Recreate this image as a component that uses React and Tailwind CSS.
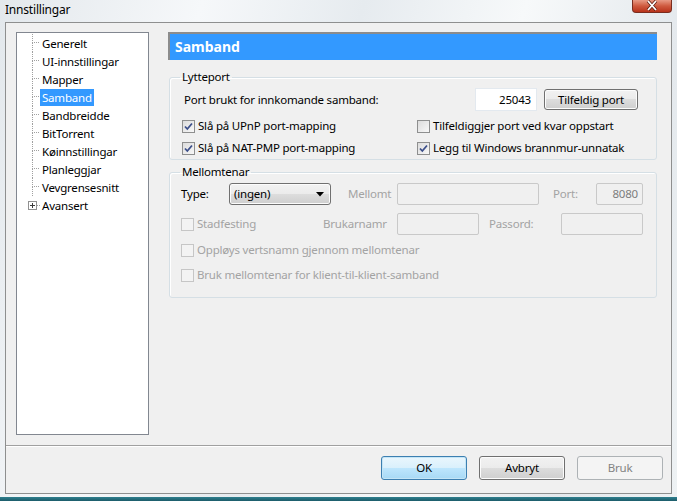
import React from "react";

function Check({ checked, disabled }) {
  return (
    <span
      className={
        disabled
          ? "w-[13px] h-[13px] border border-[#c6c6c6] bg-[#f3f3f3] flex items-center justify-center shrink-0"
          : "w-[13px] h-[13px] border border-[#8e8f8f] bg-[linear-gradient(135deg,#dcdcdc,#f8f8f8)] flex items-center justify-center shrink-0"
      }
    >
      {checked && (
        <svg width="11" height="11" viewBox="0 0 11 11">
          <path d="M2 5.5 L4.3 8 L9 2.5" fill="none" stroke="#3c4f8a" strokeWidth="1.8" />
        </svg>
      )}
    </span>
  );
}

function TreeRow({ label, selected, last }) {
  return (
    <div className="flex items-center h-[18px]">
      {last ? (
        <div className="w-[23px] h-full flex items-center">
          <div className="ml-[11px] w-[9px] h-[9px] border border-[#919191] bg-white flex items-center justify-center">
            <svg width="7" height="7" viewBox="0 0 7 7">
              <path d="M1 3.5 H6 M3.5 1 V6" stroke="#3c3c3c" strokeWidth="1" />
            </svg>
          </div>
          <div className="w-[3px] border-b border-dotted border-[#a0a0a0]" />
        </div>
      ) : (
        <div className="w-[23px] h-full flex">
          <div className="ml-[15px] w-[7px] h-full flex flex-col">
            <div className="h-[9px] border-l border-b border-dotted border-[#a0a0a0]" />
            <div className="h-[9px] border-l border-dotted border-[#a0a0a0]" />
          </div>
        </div>
      )}
      <span
        className={
          selected
            ? "px-[2px] h-[17px] leading-[17px] bg-[#3399ff] text-white"
            : "px-[2px] h-[17px] leading-[17px] text-black"
        }
      >
        {label}
      </span>
    </div>
  );
}

function Button({ children, variant }) {
  const cls =
    variant === "default"
      ? "w-[86px] h-[24px] rounded-[3px] border border-[#3c7fb1] bg-[linear-gradient(#eaf6fd_0%,#d9f0fc_50%,#bee6fd_50%,#a7d9f5_100%)] text-black flex items-center justify-center shadow-[inset_0_0_0_1px_#c4e5f6]"
      : variant === "disabled"
      ? "w-[86px] h-[24px] rounded-[3px] border border-[#adb2b5] bg-[#f4f4f4] text-[#838383] flex items-center justify-center"
      : "w-[86px] h-[24px] rounded-[3px] border border-[#707070] bg-[linear-gradient(#f2f2f2_0%,#ebebeb_50%,#dddddd_50%,#cfcfcf_100%)] text-black flex items-center justify-center shadow-[inset_0_0_0_1px_#fcfcfc]";
  return <div className={cls}>{children}</div>;
}

export default function App() {
  const tree = [
    "Generelt",
    "UI-innstillingar",
    "Mapper",
    "Samband",
    "Bandbreidde",
    "BitTorrent",
    "Køinnstillingar",
    "Planleggjar",
    "Vevgrensesnitt",
  ];
  return (
    <div className="w-[677px] h-[501px] flex flex-col overflow-hidden font-['Noto_Sans',sans-serif] text-[11.5px] tracking-[-0.2px] bg-[linear-gradient(105deg,#e3e8ec_0%,#f6f8fa_25%,#e6ebef_45%,#f7f9fa_65%,#e4e9ed_85%,#eef2f4_100%)]">
      {/* Title bar */}
      <div className="h-[22px] flex items-start justify-between shrink-0">
        <span className="pl-[5px] pt-[2px] text-black leading-[16px] text-[12px]">Innstillingar</span>
        <div className="mr-[5px] w-[40px] h-[13px] rounded-b-[4px] border border-t-0 border-[#7a2d1f] bg-[linear-gradient(#e89a85,#cf5a3f_50%,#b8331b)] flex items-start justify-center overflow-hidden">
          <svg width="14" height="11" viewBox="0 -4 14 11">
            <path d="M3 -3 L11 6 M11 -3 L3 6" stroke="#5a1a10" strokeWidth="3.2" />
            <path d="M3 -3 L11 6 M11 -3 L3 6" stroke="#ffffff" strokeWidth="1.8" />
          </svg>
        </div>
      </div>

      {/* Frame */}
      <div className="mx-[5px] h-[472px] shrink-0 border border-[#8e8f8f] bg-[#f0f0f0] flex flex-col">
        <div className="flex pt-[9px] pl-[10px] h-[413px]">
          {/* Tree */}
          <div className="w-[133px] h-[403px] border border-[#828790] bg-white pt-[1px] flex flex-col">
            {tree.map((t) => (
              <TreeRow key={t} label={t} selected={t === "Samband"} />
            ))}
            <TreeRow label="Avansert" last />
          </div>

          {/* Right panel */}
          <div className="ml-[19px] w-[489px] flex flex-col">
            <div className="h-[28px] border-t-2 border-l-2 border-[#8c8c8c] bg-[#3399ff] flex items-center pl-[5px]">
              <span className="text-white font-bold text-[14px] leading-[18px] tracking-normal">Samband</span>
            </div>

            {/* Lytteport */}
            <fieldset className="mt-[9px] ml-[1px] border border-[#d5dfe5] rounded-[3px] px-[10px] pb-[1px] shadow-[inset_1px_1px_0_#ffffff]">
              <legend className="px-[2px] leading-[16px] text-black">Lytteport</legend>
              <div className="pt-[3px] flex items-center h-[26px]">
                <span className="ml-[4px] text-black">Port brukt for innkomande samband:</span>
                <div className="ml-auto w-[62px] h-[23px] border border-[#e3e9ef] bg-white flex items-center justify-end pr-[5px] text-black">
                  25043
                </div>
                <div className="ml-[7px] mr-[8px]">
                  <div className="w-[94px] h-[21px] rounded-[3px] border border-[#707070] bg-[linear-gradient(#f2f2f2_0%,#ebebeb_50%,#dddddd_50%,#cfcfcf_100%)] shadow-[inset_0_0_0_1px_#fcfcfc] flex items-center justify-center text-black">
                    Tilfeldig port
                  </div>
                </div>
              </div>
              <div className="mt-[5px] h-[20px] flex items-center">
                <div className="w-[236px] flex items-center">
                  <span className="ml-[2px]"><Check checked /></span>
                  <span className="ml-[3px] text-black">Slå på UPnP port-mapping</span>
                </div>
                <div className="ml-[1px] flex items-center">
                  <Check />
                  <span className="ml-[3px] text-black">Tilfeldiggjer port ved kvar oppstart</span>
                </div>
              </div>
              <div className="mt-[2px] h-[20px] flex items-center">
                <div className="w-[236px] flex items-center">
                  <span className="ml-[2px]"><Check checked /></span>
                  <span className="ml-[3px] text-black">Slå på NAT-PMP port-mapping</span>
                </div>
                <div className="ml-[1px] flex items-center">
                  <Check checked />
                  <span className="ml-[3px] text-black">Legg til Windows brannmur-unnatak</span>
                </div>
              </div>
            </fieldset>

            {/* Mellomtenar */}
            <fieldset className="mt-[4px] ml-[1px] border border-[#d5dfe5] rounded-[3px] px-[10px] pb-[12px] shadow-[inset_1px_1px_0_#ffffff]">
              <legend className="px-[2px] leading-[16px] text-black">Mellomtenar</legend>
              <div className="mt-[3px] h-[22px] flex items-center">
                <span className="w-[49px] pl-[1px] text-black">Type:</span>
                <div className="w-[102px] h-[22px] rounded-[3px] border border-[#707070] bg-[linear-gradient(#f2f2f2_0%,#ebebeb_50%,#dddddd_50%,#cfcfcf_100%)] shadow-[inset_0_0_0_1px_#fcfcfc] flex items-center pl-[4px] pr-[6px] text-black">
                  <span>(ingen)</span>
                  <svg className="ml-auto" width="8" height="5" viewBox="0 0 8 5">
                    <path d="M0 0 H8 L4 4.5 Z" fill="#000" />
                  </svg>
                </div>
                <span className="w-[66px] pl-[17px] text-[#a3a3a3] whitespace-nowrap overflow-hidden">Mellomt</span>
                <div className="w-[142px] h-[22px] border border-[#c9c9c9] rounded-[2px]" />
                <span className="w-[57px] pl-[14px] text-[#a3a3a3]">Port:</span>
                <div className="w-[47px] h-[22px] border border-[#c9c9c9] rounded-[2px] flex items-center justify-end pr-[4px] text-[#7d7d7d]">
                  8080
                </div>
              </div>
              <div className="mt-[8px] h-[22px] flex items-center">
                <div className="w-[143px] flex items-center">
                  <span className="ml-[1px]"><Check disabled /></span>
                  <span className="ml-[3px] text-[#a3a3a3]">Stadfesting</span>
                </div>
                <span className="w-[74px] text-[#a3a3a3] whitespace-nowrap overflow-hidden">Brukarnamr</span>
                <div className="w-[82px] h-[22px] border border-[#c9c9c9] rounded-[2px]" />
                <span className="w-[82px] pl-[10px] text-[#a3a3a3]">Passord:</span>
                <div className="w-[82px] h-[22px] border border-[#c9c9c9] rounded-[2px]" />
              </div>
              <div className="mt-[5px] h-[20px] flex items-center">
                <span className="ml-[1px]"><Check disabled /></span>
                <span className="ml-[3px] text-[#a3a3a3]">Oppløys vertsnamn gjennom mellomtenar</span>
              </div>
              <div className="mt-[5px] h-[20px] flex items-center">
                <span className="ml-[1px]"><Check disabled /></span>
                <span className="ml-[3px] text-[#a3a3a3]">Bruk mellomtenar for klient-til-klient-samband</span>
              </div>
            </fieldset>
          </div>
        </div>

        {/* Separator */}
        <div className="mt-[9px] border-t border-[#a0a0a0] shadow-[0_1px_0_#ffffff]" />

        {/* Buttons */}
        <div className="mt-[10px] flex justify-end gap-[12px] pr-[8px]">
          <Button variant="default">OK</Button>
          <Button>Avbryt</Button>
          <Button variant="disabled">Bruk</Button>
        </div>
      </div>

      <div className="h-[3px] shrink-0" />
      <div className="h-[4px] shrink-0 bg-[linear-gradient(#2f7f8e,#1c5c6a)]" />
    </div>
  );
}
